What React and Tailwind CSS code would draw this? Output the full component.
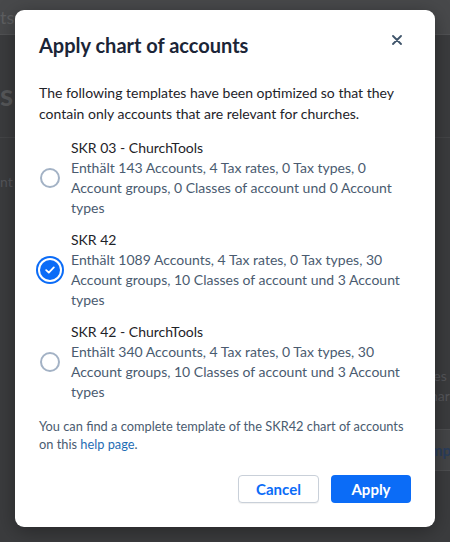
import React from "react";

function Radio({ checked }) {
  if (checked) {
    return (
      <div className="w-[20px] h-[20px] shrink-0 rounded-full bg-[#0b6cf7] ring-2 ring-[#0b6cf7] ring-offset-[2px] ring-offset-white flex items-center justify-center">
        <svg width="10" height="8" viewBox="0 0 10 8" fill="none">
          <path d="M1.2 4.2 L3.8 6.6 L8.8 1.4" stroke="white" strokeWidth="1.8" strokeLinecap="round" strokeLinejoin="round" />
        </svg>
      </div>
    );
  }
  return <div className="w-[20px] h-[20px] shrink-0 rounded-full border-2 border-[#a3b2c5] bg-white" />;
}

function Option({ title, desc, checked }) {
  return (
    <label className="flex items-center gap-[11px] pl-[1px]">
      <Radio checked={checked} />
      <div className="flex flex-col">
        <div className="text-[14px] leading-[20px] text-[#1e2329]">{title}</div>
        <div className="text-[14px] leading-[20px] text-[#4a5b70]">{desc}</div>
      </div>
    </label>
  );
}

export default function App() {
  return (
    <div
      className="relative w-[450px] h-[542px] overflow-hidden bg-[#3b3c3e]"
      style={{ fontFamily: "Lato, 'Open Sans', sans-serif" }}
    >
      {/* dimmed background page */}
      <div className="h-[35px] bg-[#48494b] border-b border-[#515254] flex items-end pb-[6px] text-[18px] leading-[22px] text-[#5e5f61] gap-[22px]">
        <span className="ml-0">ts</span>
        <span>D</span>
      </div>
      <div className="pt-[44px] text-[30px] font-bold text-[#57585a] leading-[30px]">s</div>
      <div className="mt-[28px] border-t border-[#444547]" />
      <div className="mt-[33px] text-[14px] text-[#55565a] pl-0">nt c</div>
      <div className="absolute right-0 top-[366px] w-[20px] text-[14px] leading-[20px] text-[#55565a]">
        <div>les</div>
        <div>nar</div>
      </div>
      <div className="absolute right-0 top-[429px] w-[20px] h-[42px] bg-[#444547] border-y border-[#4d4e50] flex items-center text-[15px] font-bold text-[#2b3e5c]">
        mp
      </div>

      {/* modal */}
      <div className="absolute left-[15px] top-[10px] w-[420px] h-[517px] bg-white rounded-[9px] shadow-[0_4px_20px_rgba(0,0,0,0.35)] px-[24px] pt-[21px]">
        <div className="flex items-start justify-between">
          <h2 className="text-[20px] leading-[28px] font-bold text-[#1b2537]">Apply chart of accounts</h2>
          <button className="mt-[1px] mr-[6px] w-[16px] h-[16px] flex items-center justify-center text-[#3f546a]">
            <svg width="10" height="10" viewBox="0 0 10 10">
              <path d="M1 1 L9 9 M9 1 L1 9" stroke="currentColor" strokeWidth="1.8" strokeLinecap="round" />
            </svg>
          </button>
        </div>

        <p className="mt-[23px] text-[14px] leading-[21px] text-[#1e2329]">
          The following templates have been optimized so that they contain only accounts that are relevant for churches.
        </p>

        <div className="mt-[14px] flex flex-col gap-[12px]">
          <Option
            title="SKR 03 - ChurchTools"
            desc="Enthält 143 Accounts, 4 Tax rates, 0 Tax types, 0 Account groups, 0 Classes of account und 0 Account types"
          />
          <Option
            checked
            title="SKR 42"
            desc="Enthält 1089 Accounts, 4 Tax rates, 0 Tax types, 30 Account groups, 10 Classes of account und 3 Account types"
          />
          <Option
            title="SKR 42 - ChurchTools"
            desc="Enthält 340 Accounts, 4 Tax rates, 0 Tax types, 30 Account groups, 10 Classes of account und 3 Account types"
          />
        </div>

        <p className="mt-[15px] text-[12.8px] leading-[18px] text-[#4a5b70]">
          You can find a complete template of the SKR42 chart of accounts on this{" "}
          <a className="text-[#1f6db4]">help page</a>.
        </p>

        <div className="mt-[22px] flex justify-end gap-[12px]">
          <button className="w-[81px] h-[28px] rounded-[4px] border border-[#c9d0d9] bg-white text-[15px] font-bold text-[#0b6cf7] shadow-[0_1px_1px_rgba(0,0,0,0.06)]">
            Cancel
          </button>
          <button className="w-[80px] h-[28px] rounded-[4px] bg-[#0b6cf7] text-[15px] font-bold text-white">
            Apply
          </button>
        </div>
      </div>
    </div>
  );
}
